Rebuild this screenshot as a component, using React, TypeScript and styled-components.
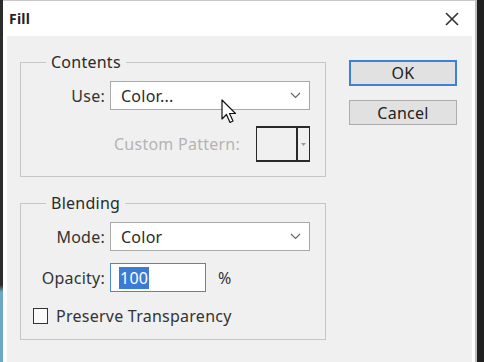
import React from "react";
import styled, { createGlobalStyle } from "styled-components";

const GlobalStyle = createGlobalStyle`
  html, body {
    margin: 0;
    padding: 0;
    background: #222;
  }
  body {
    font-family: "Noto Sans", "Open Sans", sans-serif;
    font-size: 16px;
    letter-spacing: 0.25px;
    color: #2a2a2a;
  }
`;

// outer frame: screen strip, dialog window, screen strip

const Screen = styled.div`
  width: 484px;
  height: 362px;
  display: flex;
  overflow: hidden;
  position: relative;
`;

const LeftStrip = styled.div`
  width: 3px;
  background: linear-gradient(to bottom, #2c2c2c 0, #2c2c2c 285px, #6aa9c4 292px, #6aa9c4 100%);
`;

const RightStrip = styled.div`
  width: 7px;
  background: #1f1f1f;
  border-left: 2px solid #bdbdbd;
`;

const Window = styled.div`
  flex: 1;
  display: flex;
  flex-direction: column;
  background: #fff;
  border-top: 1px solid #c8c8c8;
  padding: 0 3px 0 4px;
`;

const TitleBar = styled.div`
  height: 35px;
  display: flex;
  align-items: center;
  justify-content: space-between;
  padding: 0 12px 0 2px;
`;

const Title = styled.div`
  font-size: 14px;
  font-weight: 700;
  color: #2a1e2a;
  letter-spacing: 0.2px;
`;

const CloseButton = styled.div`
  width: 16px;
  height: 16px;
  display: flex;
  align-items: center;
  justify-content: center;
`;

const Body = styled.div`
  flex: 1;
  background: #f0f0f0;
  display: flex;
  padding: 16px 0 0 13px;
  gap: 23px;
`;

const LeftColumn = styled.div`
  width: 306px;
  display: flex;
  flex-direction: column;
  gap: 16px;
`;

const Group = styled.fieldset`
  margin: 0;
  padding: 0;
  border: 1px solid #c6c6c6;
  display: flex;
  flex-direction: column;
`;

const Legend = styled.legend`
  margin-left: 25px;
  padding: 0 5px;
  line-height: 20px;
  color: #2a2a2a;
`;

const Row = styled.div<{ $top: number; $label: number }>`
  display: grid;
  grid-template-columns: ${(p) => p.$label}px auto auto;
  justify-content: start;
  align-items: center;
  column-gap: 5px;
  margin-top: ${(p) => p.$top}px;
`;

const Label = styled.span<{ $disabled?: boolean }>`
  text-align: right;
  white-space: nowrap;
  color: ${(p) => (p.$disabled ? "#b4b4b4" : "#333")};
`;

const Select = styled.div`
  width: 200px;
  height: 29px;
  box-sizing: border-box;
  background: #fff;
  border: 1px solid #a9a9a9;
  display: flex;
  align-items: center;
  justify-content: space-between;
  padding: 0 8px 0 10px;
  color: #2a2a2a;
`;

const PatternSwatch = styled.div`
  width: 54px;
  height: 36px;
  box-sizing: border-box;
  border: 1px solid #2a2a2a;
  border-top-width: 2px;
  border-bottom-width: 2px;
  display: grid;
  grid-template-columns: 1fr 13px;
  background: #f0f0f0;
  margin-left: 11px;
`;

const SwatchArrow = styled.div`
  border-left: 2px solid #2a2a2a;
  display: flex;
  align-items: center;
  justify-content: center;
`;

const OpacityInput = styled.div`
  width: 96px;
  height: 29px;
  box-sizing: border-box;
  background: #fff;
  border: 1px solid #4c86cc;
  display: flex;
  align-items: center;
  padding-left: 8px;
`;

const Selected = styled.span`
  background: #3b7bd4;
  color: #fff;
  line-height: 22px;
  padding: 0 1px;
`;

const Percent = styled.span`
  margin-left: 7px;
  color: #333;
`;

const CheckRow = styled.label`
  display: flex;
  align-items: center;
  gap: 8px;
  margin: 13px 0 12px 12px;
  color: #333;
`;

const Checkbox = styled.span`
  width: 15px;
  height: 16px;
  box-sizing: border-box;
  border: 1px solid #333;
  background: #fafafa;
`;

const RightColumn = styled.div`
  display: flex;
  flex-direction: column;
  gap: 14px;
  padding-top: 8px;
`;

const Button = styled.div<{ $default?: boolean }>`
  width: 108px;
  height: ${(p) => (p.$default ? 26 : 25)}px;
  box-sizing: border-box;
  background: #e1e1e1;
  border: ${(p) => (p.$default ? "2px solid #3f80d4" : "1px solid #adadad")};
  display: flex;
  align-items: center;
  justify-content: center;
  color: #222;
`;

const Cursor = styled.svg`
  position: absolute;
  left: 221px;
  top: 99px;
`;

const Chevron = () => (
  <svg width="11" height="7" viewBox="0 0 11 7">
    <path d="M1 1 L5.5 5.5 L10 1" fill="none" stroke="#666" strokeWidth="1.2" />
  </svg>
);

export default function App() {
  return (
    <Screen>
      <GlobalStyle />
      <LeftStrip />
      <Window>
        <TitleBar>
          <Title>Fill</Title>
          <CloseButton>
            <svg width="14" height="14" viewBox="0 0 14 14">
              <path d="M1 1 L13 13 M13 1 L1 13" stroke="#333" strokeWidth="1.6" />
            </svg>
          </CloseButton>
        </TitleBar>
        <Body>
          <LeftColumn>
            <Group>
              <Legend>Contents</Legend>
              <Row $top={9} $label={84}>
                <Label>Use:</Label>
                <Select>
                  Color...
                  <Chevron />
                </Select>
              </Row>
              <Row $top={16} $label={219} style={{ marginBottom: 14 }}>
                <Label $disabled>Custom Pattern:</Label>
                <PatternSwatch>
                  <span />
                  <SwatchArrow>
                    <svg width="5" height="3" viewBox="0 0 5 3">
                      <path d="M0 0 L5 0 L2.5 3 Z" fill="#999" />
                    </svg>
                  </SwatchArrow>
                </PatternSwatch>
              </Row>
            </Group>
            <Group>
              <Legend>Blending</Legend>
              <Row $top={9} $label={84}>
                <Label>Mode:</Label>
                <Select>
                  Color
                  <Chevron />
                </Select>
              </Row>
              <Row $top={12} $label={84}>
                <Label>Opacity:</Label>
                <OpacityInput>
                  <Selected>100</Selected>
                </OpacityInput>
                <Percent>%</Percent>
              </Row>
              <CheckRow>
                <Checkbox />
                Preserve Transparency
              </CheckRow>
            </Group>
          </LeftColumn>
          <RightColumn>
            <Button $default>OK</Button>
            <Button>Cancel</Button>
          </RightColumn>
        </Body>
      </Window>
      <RightStrip />
      <Cursor width="18" height="26" viewBox="0 0 18 26">
        <path
          d="M1 1 L1 20 L5.5 15.5 L9 23.5 L12 22 L8.5 14.5 L14.5 14.5 Z"
          fill="#fff"
          stroke="#111"
          strokeWidth="1.2"
          strokeLinejoin="round"
        />
      </Cursor>
    </Screen>
  );
}
